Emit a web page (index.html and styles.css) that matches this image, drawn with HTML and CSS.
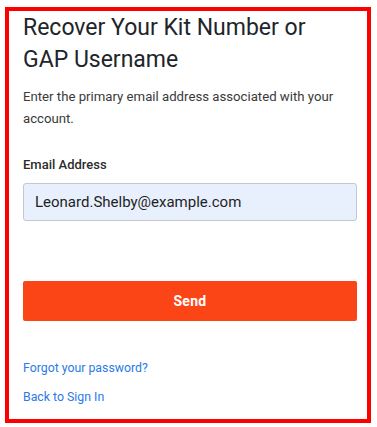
FILE: index.html
```html
<!DOCTYPE html>
<html>
<head>
<meta charset="utf-8">
<link rel="stylesheet" href="styles.css">
</head>
<body>
<div class="frame">
  <h1 class="title">Recover Your Kit Number or GAP Username</h1>
  <p class="intro">Enter the primary email address associated with your account.</p>
  <label class="label" for="email">Email Address</label>
  <input class="input" id="email" type="text" value="Leonard.Shelby@example.com">
  <button class="send" type="button">Send</button>
  <div class="links">
    <a class="link" href="#">Forgot your password?</a>
    <a class="link" href="#">Back to Sign In</a>
  </div>
</div>
</body>
</html>
```

FILE: styles.css
```css
html, body {
  margin: 0;
  padding: 0;
  background: #fff;
}
body {
  font-family: Roboto, "Liberation Sans", sans-serif;
}
.frame {
  box-sizing: border-box;
  margin: 7px 0 0 5px;
  width: 366px;
  height: 416px;
  border: 4px solid #ff0000;
  padding: 1px 10px 0 14px;
  display: flex;
  flex-direction: column;
  overflow: hidden;
}
.title {
  margin: 0;
  max-width: 320px;
  font-size: 23px;
  line-height: 32px;
  font-weight: 400;
  color: #212529;
}
.intro {
  margin: 10px 0 0;
  font-size: 13.2px;
  line-height: 22px;
  color: #3a3a3a;
}
.label {
  margin-top: 26px;
  font-size: 13px;
  line-height: 18px;
  font-weight: 500;
  color: #2b2b2b;
}
.input {
  box-sizing: border-box;
  margin: 9px 0 0;
  width: 334px;
  height: 38px;
  border: 1px solid #c3c7cf;
  border-radius: 3px;
  background: #e8f0fe;
  padding: 0 11px;
  font-family: Roboto, "Liberation Sans", sans-serif;
  font-size: 15px;
  color: #1f1f1f;
  outline: none;
}
.send {
  margin-top: 60px;
  width: 334px;
  height: 40px;
  border: none;
  border-radius: 2px;
  background: #fc4516;
  color: #fff;
  font-family: Roboto, "Liberation Sans", sans-serif;
  font-size: 14px;
  font-weight: 700;
  letter-spacing: 0.3px;
}
.links {
  margin-top: 38px;
  display: flex;
  flex-direction: column;
  align-items: flex-start;
  gap: 11px;
}
.link {
  font-size: 12.3px;
  line-height: 18px;
  color: #2a7ae8;
  text-decoration: none;
}
```
